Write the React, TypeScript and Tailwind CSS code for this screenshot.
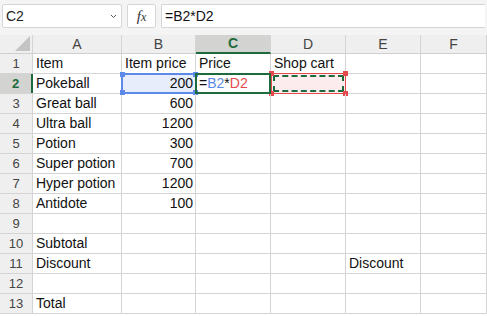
import React from "react";

const cols = ["A", "B", "C", "D", "E", "F"];
const colW = ["w-[89px]", "w-[74px]", "w-[75px]", "w-[75px]", "w-[75px]", "flex-1"];

type Row = { a?: string; b?: string; d?: string; e?: string };
const rows: Row[] = [
  { a: "Item", b: "Item price", d: "Shop cart" },
  { a: "Pokeball", b: "200" },
  { a: "Great ball", b: "600" },
  { a: "Ultra ball", b: "1200" },
  { a: "Potion", b: "300" },
  { a: "Super potion", b: "700" },
  { a: "Hyper potion", b: "1200" },
  { a: "Antidote", b: "100" },
  {},
  { a: "Subtotal" },
  { a: "Discount", e: "Discount" },
  {},
  { a: "Total" },
];

const cellFont = "font-['Liberation_Sans',Arial,sans-serif] text-[14px] leading-[17px] text-[#111]";

function Handle({ pos, color }: { pos: string; color: string }) {
  return <span className={`absolute w-[5px] h-[5px] ${pos} ${color}`} />;
}

export default function App() {
  return (
    <div className="w-[487px] h-[316px] overflow-hidden bg-white font-['Liberation_Sans',Arial,sans-serif]">
      {/* Toolbar */}
      <div className="h-[35px] bg-[#f4f4f4] flex items-start pt-[4px] px-[2px] gap-[5px]">
        <div className="w-[120px] h-[24px] bg-white border border-[#d6d6d6] rounded-[2px] flex items-center justify-between pl-[3px] pr-[4px]">
          <span className="text-[14px] text-[#222]">C2</span>
          <svg width="7" height="5" viewBox="0 0 7 5">
            <path d="M1 1 L3.5 3.5 L6 1" fill="none" stroke="#555" strokeWidth="1" />
          </svg>
        </div>
        <div className="w-[29px] h-[24px] bg-white border border-[#d6d6d6] rounded-[2px] flex items-center justify-center">
          <span className="font-['Liberation_Serif',serif] italic text-[15px] text-[#333]">
            f<span className="text-[12px]">x</span>
          </span>
        </div>
        <div className="flex-1 h-[24px] bg-white border border-[#d6d6d6] border-r-0 rounded-l-[2px] flex items-center pl-[3px]">
          <span className="text-[14px] text-[#111]">=B2*D2</span>
        </div>
      </div>

      {/* Column headers */}
      <div className="flex h-[19px] bg-[#efefef] border-b border-[#cfcfcf]">
        <div className="w-[33px] shrink-0 border-r border-[#d4d4d4] relative">
          <svg className="absolute right-[2px] bottom-[2px]" width="15" height="15" viewBox="0 0 15 15">
            <path d="M15 0 L15 15 L0 15 Z" fill="#c4c4c4" />
          </svg>
        </div>
        {cols.map((c, i) => (
          <div
            key={c}
            className={`${colW[i]} shrink-0 border-r border-[#d4d4d4] flex items-center justify-center text-[14px] ${
              c === "C"
                ? "bg-[#d3d3d1] text-[#1d6b3c] font-bold border-b-2 border-b-[#1d6b3c] -mb-px"
                : "text-[#444]"
            }`}
          >
            {c}
          </div>
        ))}
      </div>

      {/* Rows */}
      {rows.map((r, idx) => {
        const n = idx + 1;
        const sel = n === 2;
        return (
          <div key={n} className="flex h-[20px] border-b border-[#d4d4d4]">
            <div
              className={`w-[33px] shrink-0 flex items-end pb-px justify-center text-[13px] leading-[17px] ${
                sel
                  ? "bg-[#d3d3d1] text-[#1d6b3c] font-bold border-r-2 border-r-[#1d6b3c]"
                  : "bg-[#efefef] text-[#444] border-r border-[#d4d4d4]"
              }`}
            >
              {n}
            </div>
            {/* A */}
            <div className={`w-[89px] shrink-0 border-r border-[#d4d4d4] flex items-end pb-px pl-[3px] ${cellFont} whitespace-nowrap`}>
              {r.a}
            </div>
            {/* B */}
            <div
              className={`w-[74px] shrink-0 border-r border-[#d4d4d4] flex items-end pb-px ${
                n === 1 ? "justify-start pl-[3px]" : "justify-end pr-[2px]"
              } ${cellFont} whitespace-nowrap relative ${sel ? "bg-[#e7edfb]" : ""}`}
            >
              {r.b}
              {sel && (
                <div className="absolute -top-px -left-px -right-[2px] -bottom-[1px] border-2 border-[#5c8ae6] pointer-events-none">
                  <Handle pos="-top-[3px] -left-[3px]" color="bg-[#5c8ae6]" />
                  <Handle pos="-top-[3px] -right-[3px]" color="bg-[#5c8ae6]" />
                  <Handle pos="-bottom-[3px] -left-[3px]" color="bg-[#5c8ae6]" />
                  <Handle pos="-bottom-[3px] -right-[3px]" color="bg-[#5c8ae6]" />
                </div>
              )}
            </div>
            {/* C */}
            <div className={`w-[75px] shrink-0 border-r border-[#d4d4d4] flex items-end pb-px pl-[3px] ${cellFont} whitespace-nowrap relative`}>
              {n === 1 && "Price"}
              {sel && (
                <>
                  <span className="relative z-10">
                    =<span className="text-[#5c8ae6]">B2</span>*<span className="text-[#e5484d]">D2</span>
                  </span>
                  <div className="absolute -top-px -left-px -right-px -bottom-px border-2 border-[#1d6b3c] pointer-events-none z-20" />
                </>
              )}
            </div>
            {/* D */}
            <div className={`w-[75px] shrink-0 border-r border-[#d4d4d4] flex items-end pb-px pl-[3px] ${cellFont} whitespace-nowrap relative ${sel ? "bg-[#fcecee]" : ""}`}>
              {r.d}
              {sel && (
                <div className="absolute -top-px left-0 -right-px -bottom-px border border-[#e5484d] pointer-events-none">
                  <div className="absolute inset-[1px] border-2 border-dashed border-[#1d6b3c]" />
                  <Handle pos="-top-[3px] -left-[3px]" color="bg-[#e5484d]" />
                  <Handle pos="-top-[3px] -right-[3px]" color="bg-[#e5484d]" />
                  <Handle pos="-bottom-[3px] -left-[3px]" color="bg-[#e5484d]" />
                  <Handle pos="-bottom-[3px] -right-[3px]" color="bg-[#e5484d]" />
                </div>
              )}
            </div>
            {/* E */}
            <div className={`w-[75px] shrink-0 border-r border-[#d4d4d4] flex items-end pb-px pl-[3px] ${cellFont} whitespace-nowrap`}>
              {r.e}
            </div>
            {/* F */}
            <div className="flex-1 border-r border-[#d4d4d4]" />
          </div>
        );
      })}
    </div>
  );
}
